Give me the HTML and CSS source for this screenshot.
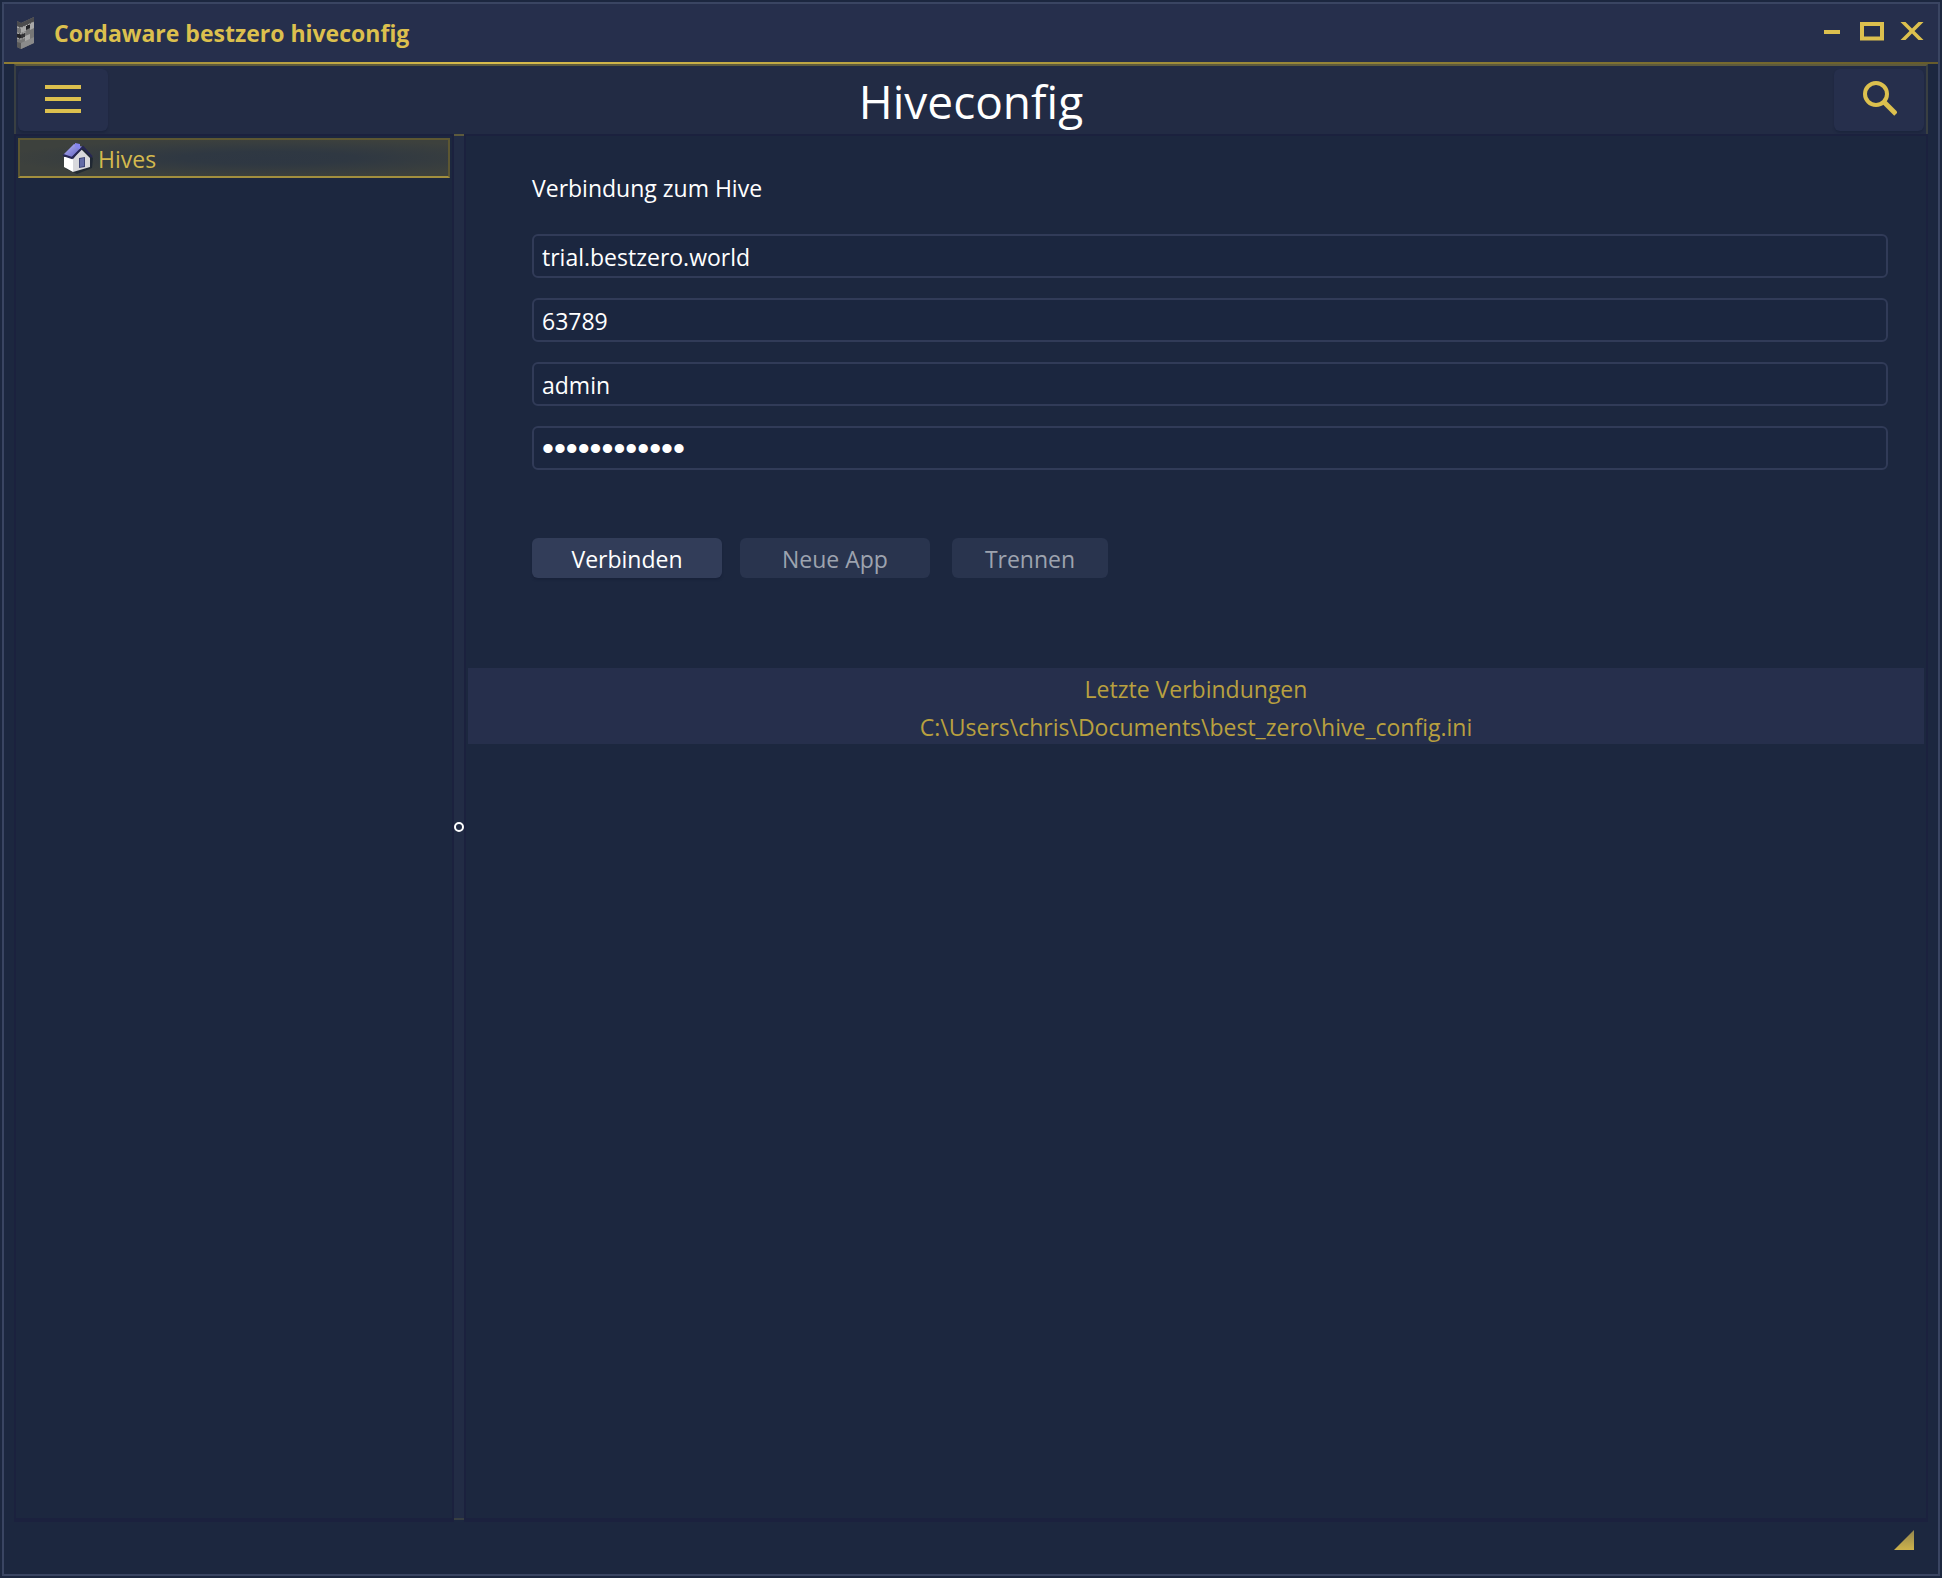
FILE: index.html
```html
<!DOCTYPE html>
<html lang="de">
<head>
<meta charset="utf-8">
<meta name="viewport" content="width=device-width, initial-scale=1">
<title>Cordaware bestzero hiveconfig</title>
<link rel="stylesheet" href="styles.css">
</head>
<body>
<div class="window">
  <header class="titlebar">
    <svg class="app-icon" width="20" height="34" viewBox="0 0 20 34" aria-hidden="true">
      <path d="M1 5L5 7 18 1V27L5 33 1 31Z" fill="#777"/>
      <path d="M1 5L5 7 18 1V7L5 12 1 10Z" fill="#4c4c4e"/>
      <path d="M5 12L10 10V15L5 17ZM14 8L18 6V12L14 14ZM9 20L14 18V24L9 26Z" fill="#a9a9a9"/>
      <path d="M10 10L14 8V12L10 14ZM1 17L5 18V23L1 22Z" fill="#232327"/>
      <path d="M5 18L9 17V21L5 23Z" fill="#333336"/>
      <path d="M5 27L18 21V27L5 33Z" fill="#8b8b8b"/>
      <path d="M1 26L5 27V33L1 31Z" fill="#5a5a5a"/>
      <path d="M1 11L5 12 18 6M1 17L5 18 10 16M1 22L5 23 10 21" fill="none" stroke="#bbb" stroke-dasharray="2 1"/>
    </svg>
    <span class="app-title">Cordaware bestzero hiveconfig</span>
    <div class="window-buttons">
      <button type="button" aria-label="Minimieren"><svg width="24" height="20" viewBox="0 0 24 20"><path d="M4 8H20V12H4Z" fill="#dcc04e"/></svg></button>
      <button type="button" aria-label="Maximieren"><svg width="24" height="20" viewBox="0 0 24 20"><path d="M2 2H22V16.500H2Z" fill="none" stroke="#dcc04e" stroke-width="4"/></svg></button>
      <button type="button" aria-label="Schließen"><svg width="24" height="20" viewBox="0 0 24 20"><path d="M0.500 0H5.500L12 6.500 18.500 0H23.500L14.500 9 23.500 18H18.500L12 11.500 5.500 18H0.500L9.500 9Z" fill="#dcc04e"/></svg></button>
    </div>
  </header>
  <main class="client">
    <div class="toolbar">
      <button class="tool-button" type="button" aria-label="Menü"><svg width="36" height="30" viewBox="0 0 36 30"><path d="M0 0H36V4H0ZM0 12H36V16H0ZM0 24H36V28H0Z" fill="#dcc04e"/></svg></button>
      <h1 class="page-title">Hiveconfig</h1>
      <button class="tool-button" type="button" aria-label="Suchen"><svg width="36" height="38" viewBox="0 0 36 38"><circle cx="15" cy="13" r="11" fill="none" stroke="#dcc04e" stroke-width="4"/><path d="M23 21L35 33" stroke="#dcc04e" stroke-width="5"/></svg></button>
    </div>
    <div class="panes">
      <nav class="tree">
        <a class="tree-item" href="#hives">
          <svg width="32" height="32" viewBox="0 0 32 32" aria-hidden="true">
            <defs><linearGradient id="roof" x2="1" y2="1"><stop offset="0" stop-color="#b9b9f8"/><stop offset="1" stop-color="#5454b8"/></linearGradient></defs>
            <path d="M3 16L18 4 31 16 30 26 15 32 4 27Z" fill="#111b2b" opacity=".6"/>
            <path d="M2 15L11 14V30L2 25Z" fill="#fff"/>
            <path d="M11 17L19 7 28 16V25L11 30Z" fill="#d8d8dc"/>
            <path d="M17 16L23 15V25L17 26Z" fill="#3e4577"/>
            <path d="M18 17L22 16V24L18 25Z" fill="#626ba6"/>
            <path d="M1 13L12 2 21 5 10 16Z" fill="url(#roof)"/>
            <path d="M1 13L10 16 21 5 30 15" fill="none" stroke="#262653" stroke-width="2"/>
            <path d="M13 1L18 2V7L13 5Z" fill="#8585ee"/>
          </svg>
          <span>Hives</span>
        </a>
      </nav>
      <div class="splitter" role="separator" aria-orientation="vertical"><span class="grip"></span></div>
      <section class="content">
        <form class="connection">
          <h2 class="form-title">Verbindung zum Hive</h2>
          <input class="field" type="text" aria-label="Server" value="trial.bestzero.world">
          <input class="field" type="text" aria-label="Port" value="63789">
          <input class="field" type="text" aria-label="Benutzer" value="admin">
          <input class="field password" type="password" aria-label="Passwort" value="abcdefghijkl">
          <div class="actions">
            <button class="action" type="button">Verbinden</button>
            <button class="action" type="button" disabled>Neue App</button>
            <button class="action short" type="button" disabled>Trennen</button>
          </div>
        </form>
        <div class="recent">
          <span>Letzte Verbindungen</span>
          <a href="#recent">C:\Users\chris\Documents\best_zero\hive_config.ini</a>
        </div>
      </section>
    </div>
  </main>
  <footer class="statusbar"><svg width="20" height="20" viewBox="0 0 20 20" aria-hidden="true"><defs><linearGradient id="corner" x2="0" y2="1"><stop offset="0" stop-color="#94864e"/><stop offset="1" stop-color="#cdb24b"/></linearGradient></defs><path d="M20 0V20H0Z" fill="url(#corner)"/></svg></footer>
</div>
</body>
</html>
```
FILE: styles.css
```css
* {
  box-sizing: border-box;
}

body {
  margin: 0;
  padding: 2px;
  min-height: 100vh;
  display: flex;
  background: #1c273f;
  color: #fff;
  font: 23px/32px "Open Sans", "Noto Sans", sans-serif;
}

button,
input {
  font: inherit;
  color: inherit;
}

button {
  padding: 0;
  border: 0;
  background: none;
}

svg {
  display: block;
  flex: none;
}

a {
  color: inherit;
  text-decoration: none;
}

.window {
  flex: 1;
  display: flex;
  flex-direction: column;
  border: 2px solid #3a4562;
}

.titlebar {
  display: flex;
  align-items: center;
  height: 60px;
  padding: 0 14px 0 12px;
  background: #262f4c;
  border-bottom: 2px solid;
  border-image: linear-gradient(90deg, #8d7c34, #d9bd4d 25%, #a9963d 55%, #665c2c) 1;
}

.app-title {
  margin-left: 18px;
  color: #dcc04e;
  font-weight: 700;
}

.window-buttons {
  display: flex;
  gap: 16px;
  margin-left: auto;
  padding-bottom: 2px;
}

.client {
  flex: 1;
  display: flex;
  flex-direction: column;
  margin: 0 10px;
}

.toolbar {
  display: flex;
  align-items: center;
  justify-content: space-between;
  height: 70px;
  padding: 0 2px;
  background: #222b44;
  border: 2px solid #393f42;
  border-top-color: #5d5a3d;
  border-bottom: 0;
}

.tool-button {
  display: grid;
  place-items: center;
  width: 90px;
  height: 62px;
  border-radius: 6px;
  background: #262f4c;
  box-shadow: 0 2px 2px #1c253e;
}

.page-title {
  margin: 0;
  padding-top: 2px;
  font-size: 46px;
  font-weight: 400;
  line-height: 64px;
}

.panes {
  flex: 1;
  display: flex;
}

.tree {
  width: 440px;
  padding: 2px;
  border: 2px solid #1b213e;
  border-bottom-width: 4px;
}

.tree-item {
  display: flex;
  align-items: center;
  gap: 4px;
  height: 40px;
  padding-left: 42px;
  color: #d4b94e;
  background: radial-gradient(ellipse at 58% 50%, #2e3743 0%, #2f3842 25%, #3d413d 75%);
  border: 2px solid #5d5732;
  border-bottom-color: #a28f3e;
}

.tree-item span {
  padding-top: 2px;
}

.splitter {
  display: grid;
  place-items: center;
  width: 10px;
  margin-bottom: 2px;
  background: #222c45;
  border-top: 2px solid #5d5a3d;
  border-bottom: 2px solid #393f42;
}

.grip {
  width: 10px;
  height: 10px;
  border: 2px solid #fff;
  border-radius: 50%;
}

.content {
  flex: 1;
  border: 2px solid #1b213e;
  border-bottom-width: 4px;
}

.connection {
  display: flex;
  flex-direction: column;
  gap: 20px;
  padding: 36px 38px 0 66px;
}

.form-title {
  margin: 0 0 10px;
  font-size: 23px;
  font-weight: 400;
}

.field {
  width: 100%;
  height: 44px;
  padding: 2px 8px 0;
  border: 2px solid #313b58;
  border-radius: 6px;
  background: #1b263f;
  outline: 0;
}

.password {
  padding-top: 0;
  font-family: "Liberation Sans", sans-serif;
  font-size: 34px;
}

.actions {
  display: flex;
  gap: 18px;
  margin-top: 48px;
}

.action {
  width: 190px;
  height: 40px;
  padding-top: 2px;
  border-radius: 6px;
  background: #323d59;
  box-shadow: 0 2px 2px #19223a;
}

.action:disabled {
  color: #9da3af;
  background: #29344e;
  box-shadow: none;
}

.short {
  width: 156px;
  margin-left: 4px;
}

.recent {
  display: flex;
  flex-direction: column;
  align-items: center;
  margin: 90px 2px 0;
  padding-top: 2px;
  height: 76px;
  background: #262f4c;
  color: #b9a03f;
  line-height: 38px;
}

.statusbar {
  display: flex;
  justify-content: flex-end;
  height: 52px;
  padding: 8px 24px;
}
```
